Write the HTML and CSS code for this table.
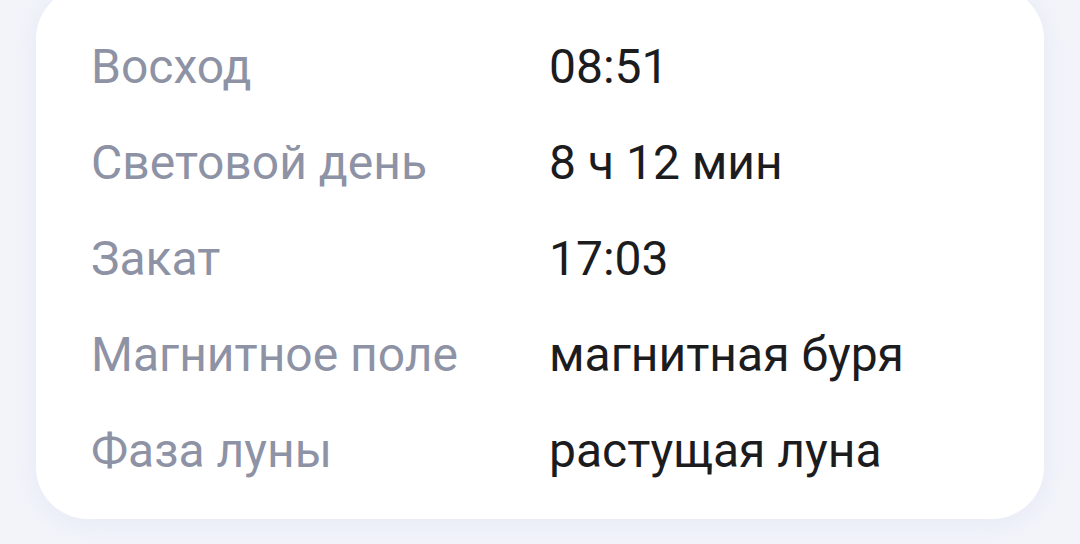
FILE: index.html
```html
<!DOCTYPE html>
<html lang="ru">
<head>
<meta charset="utf-8">
<link rel="stylesheet" href="styles.css">
</head>
<body>
<div class="card">
  <dl class="info">
    <dt class="label">Восход</dt><dd class="value">08:51</dd>
    <dt class="label">Световой день</dt><dd class="value">8 ч 12 мин</dd>
    <dt class="label">Закат</dt><dd class="value">17:03</dd>
    <dt class="label">Магнитное поле</dt><dd class="value">магнитная буря</dd>
    <dt class="label">Фаза луны</dt><dd class="value">растущая луна</dd>
  </dl>
</div>
</body>
</html>
```
FILE: styles.css
```css
html, body {
  margin: 0;
  padding: 0;
}
body {
  width: 1080px;
  height: 544px;
  overflow: hidden;
  background: #f2f4fa;
  font-family: Roboto, "Noto Sans", sans-serif;
}
.card {
  margin: -13px 0 0 36px;
  width: 1008px;
  height: 532px;
  box-sizing: border-box;
  background: #ffffff;
  border-radius: 52px;
  box-shadow: 0 4px 24px rgba(180, 190, 220, 0.18);
  padding: 32px 0 0 55px;
}
.info {
  margin: 0;
  display: grid;
  grid-template-columns: 458px 1fr;
  grid-auto-rows: 96px;
  align-items: center;
}
.label, .value {
  margin: 0;
  font-size: 48px;
  line-height: 96px;
}
.label {
  color: #8e92a5;
}
.value {
  color: #1c1c1e;
}
```
